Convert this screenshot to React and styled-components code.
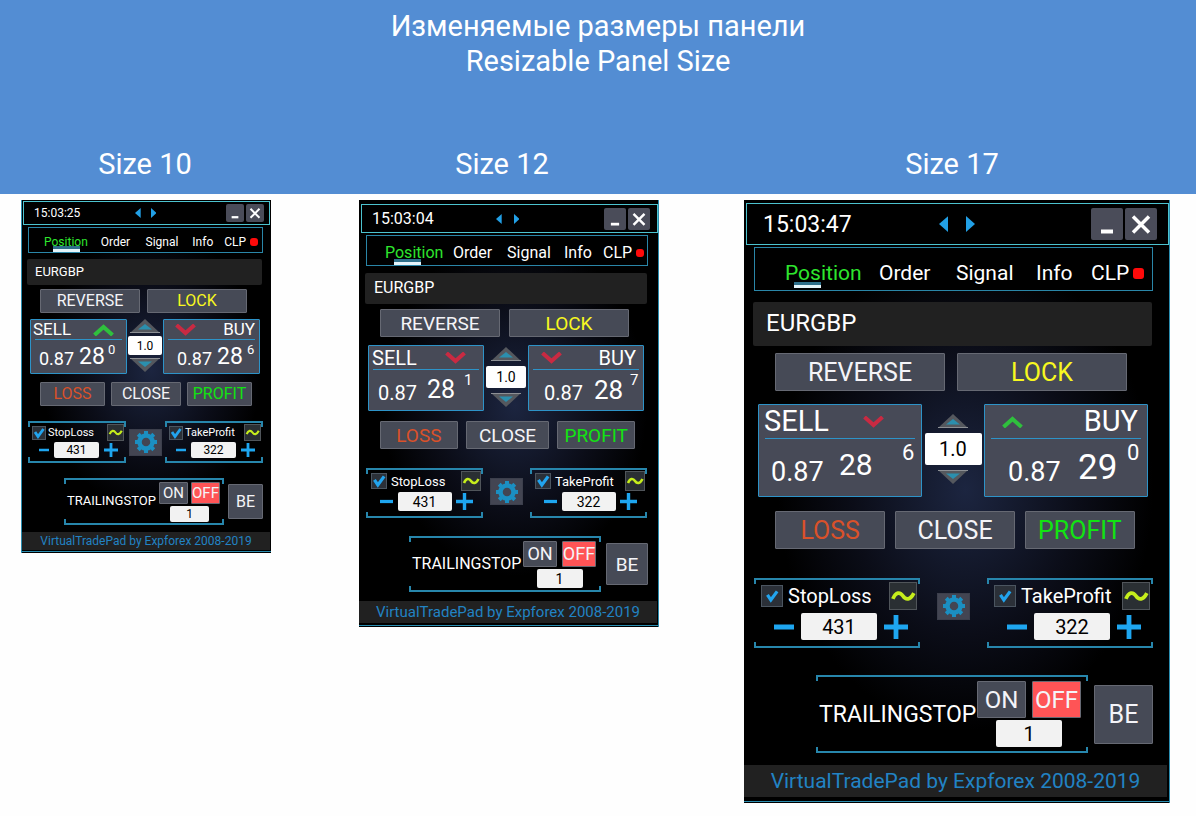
import React from "react";
import { useState } from "react";
import styled, { createGlobalStyle, css, ThemeProvider } from "styled-components";

const GlobalStyle = createGlobalStyle`
  *,
  *::before,
  *::after {
    box-sizing: border-box;
  }
  body {
    margin: 0;
    background: #fefefe;
    font-family: Roboto, "Liberation Sans", sans-serif;
  }
  button,
  input {
    margin: 0;
    padding: 0;
    border: none;
    font-family: inherit;
  }
  button {
    cursor: pointer;
  }
`;

// rows: [space above, height, left margin, right margin]
const size10 = {
  name: "Size 10",
  column: 88,
  edge: "left",
  rows: {
    title: [1, 24, 2, 1],
    tabs: [2, 26, 7, 8],
    symbol: [6, 26, 6, 9],
    hedge: [4, 24, 19, 24],
    quotes: [6, 55, 9, 11],
    exits: [8, 24, 19, 19],
    stops: [15, 42, 7, 8],
    trailing: [15, 47, 43, 8],
    footer: [7, 18, 1, 1],
  },
  bottom: 3,
  text: 12,
  timeText: 12,
  symbolText: 13,
  buttonText: 16,
  stopText: 11,
  fieldText: 12,
  trailingText: 13,
  footerText: 12,
  time: { pad: 11, width: 101, arrow: 10, arrowGap: 10, button: 18, end: 5 },
  tabColumns: "57fr 45fr 47fr 32fr 38fr",
  tabPad: 15,
  tabDrop: 3,
  underline: 0,
  dot: 8,
  symbolPad: 8,
  hedgeGap: 7,
  exitColumns: "65fr 70fr 65fr",
  exitGap: 6,
  quote: {
    head: 20,
    headText: 17,
    line: 4,
    price: 18,
    tick: 13,
    sell: { columns: "40px 29px auto", pad: 8, big: 23, lift: 0, chevron: 12, text: 2 },
    buy: { columns: "40px 30px auto", pad: 13, big: 23, lift: 0, chevron: 11, text: 4 },
    drop: 5,
  },
  lot: { column: 36, width: 34, height: 19, gap: 3, lift: 2 },
  stop: { check: 14, mark: 14, wave: 17, pad: 4, end: 2, top: 3, gap: 2, between: 1, inner: 11, outer: 8, icon: 14, field: 45, height: 16 },
  gear: { column: 39, lift: 0 },
  trail: { box: "160fr", be: "35fr", gap: 4, toggle: 29, toggleHeight: 22, toggleGap: 3, field: 39, height: 16, end: 4, top: 4, beHeight: 35 },
};

const size12 = {
  name: "Size 12",
  column: 85,
  edge: "right",
  rows: {
    title: [4, 29, 2, 1],
    tabs: [2, 31, 7, 11],
    symbol: [7, 31, 6, 12],
    hedge: [5, 28, 21, 30],
    quotes: [8, 66, 9, 15],
    exits: [10, 28, 21, 24],
    stops: [19, 50, 7, 12],
    trailing: [18, 56, 50, 11],
    footer: [9, 22, 0, 2],
  },
  bottom: 4,
  text: 16,
  timeText: 16,
  symbolText: 16,
  buttonText: 19,
  stopText: 13,
  fieldText: 14,
  trailingText: 16,
  footerText: 15,
  time: { pad: 11, width: 124, arrow: 10, arrowGap: 12, button: 22, end: 7 },
  tabColumns: "68fr 54fr 57fr 39fr 44fr",
  tabPad: 18,
  tabDrop: 4,
  underline: 0,
  dot: 8,
  symbolPad: 9,
  hedgeGap: 9,
  exitColumns: "78fr 84fr 78fr",
  exitGap: 8,
  quote: {
    head: 24,
    headText: 20,
    line: 4,
    price: 20,
    tick: 15,
    sell: { columns: "49px 37px auto", pad: 9, big: 25, lift: 1, chevron: 17, text: 3 },
    buy: { columns: "50px 36px auto", pad: 15, big: 26, lift: 0, chevron: 12, text: 7 },
    drop: 7,
  },
  lot: { column: 44, width: 40, height: 22, gap: 5, lift: 2 },
  stop: { check: 16, mark: 16, wave: 20, pad: 5, end: 2, top: 3, gap: 4, between: 1, inner: 14, outer: 10, icon: 17, field: 54, height: 19 },
  gear: { column: 47, lift: 3 },
  trail: { box: "192fr", be: "42fr", gap: 5, toggle: 34, toggleHeight: 26, toggleGap: 5, field: 46, height: 19, end: 5, top: 5, beHeight: 42 },
};

const size17 = {
  name: "Size 17",
  column: 0,
  edge: "right",
  rows: {
    title: [3, 42, 2, 1],
    tabs: [2, 44, 10, 17],
    symbol: [11, 44, 9, 18],
    hedge: [7, 38, 31, 43],
    quotes: [13, 93, 14, 22],
    exits: [14, 38, 31, 35],
    stops: [29, 70, 10, 17],
    trailing: [27, 78, 72, 17],
    footer: [12, 32, 0, 3],
  },
  bottom: 6,
  text: 21,
  timeText: 23,
  symbolText: 24,
  buttonText: 25,
  stopText: 20,
  fieldText: 20,
  trailingText: 23,
  footerText: 21,
  time: { pad: 17, width: 176, arrow: 16, arrowGap: 18, button: 32, end: 11 },
  tabColumns: "94fr 77fr 80fr 55fr 61fr",
  tabPad: 30,
  tabDrop: 8,
  underline: 2,
  dot: 11,
  symbolPad: 13,
  hedgeGap: 12,
  exitColumns: "110fr 119fr 110fr",
  exitGap: 10,
  quote: {
    head: 34,
    headText: 29,
    line: 6,
    price: 27,
    tick: 22,
    sell: { columns: "68px 63px auto", pad: 12, big: 30, lift: 6, chevron: 37, text: 5 },
    buy: { columns: "70px 49px auto", pad: 23, big: 35, lift: 1, chevron: 17, text: 9 },
    drop: 10,
  },
  lot: { column: 62, width: 57, height: 32, gap: 5, lift: 4 },
  stop: { check: 22, mark: 16, wave: 28, pad: 7, end: 3, top: 4, gap: 5, between: 3, inner: 20, outer: 12, icon: 24, field: 76, height: 27 },
  gear: { column: 67, lift: 14 },
  trail: { box: "272fr", be: "59fr", gap: 6, toggle: 49, toggleHeight: 37, toggleGap: 6, field: 66, height: 27, end: 7, top: 6, beHeight: 59 },
};

const row = (name) => css`
  height: ${({ theme }) => theme.rows[name][1]}px;
  margin: ${({ theme }) => {
    const [top, , left, right] = theme.rows[name];
    return `${top}px ${right}px 0 ${left}px`;
  }};
`;

const Header = styled.header`
  height: 194px;
  padding-top: 9px;
  display: flex;
  flex-direction: column;
  justify-content: space-between;
  background: #538dd3;
  color: white;
`;
const Heading = styled.h1`
  margin: 0;
  font-size: 29px;
  line-height: 35px;
  font-weight: 400;
  text-align: center;
`;
const SizeNames = styled.div`
  display: grid;
  grid-template-columns: 290fr 424fr 476fr;
  padding: 0 6px 12px 0;
`;
const SizeName = styled.h2`
  margin: 0;
  font-size: 29px;
  line-height: 36px;
  font-weight: 400;
  text-align: center;
`;
const Panels = styled.main`
  display: grid;
  grid-template-columns: 338fr 385fr 426fr;
  align-items: start;
  padding: 6px 26px 12px 21px;
`;
const Panel = styled.section`
  display: flow-root;
  margin-right: ${({ theme }) => theme.column}px;
  padding-bottom: ${({ theme }) => theme.bottom}px;
  color: white;
  background: linear-gradient(#2a8db0, #2a8db0) 0 calc(100% - 1px) / 100% 1px
      no-repeat,
    linear-gradient(#2a8db0, #2a8db0) ${({ theme }) => theme.edge} 0 / 1px 100%
      no-repeat,
    radial-gradient(ellipse 44% 40% at 52% 48%, #1c2540, #0b0d18 60%, #000);
`;
const TitleBar = styled.div`
  ${row("title")}
  display: flex;
  align-items: center;
  padding: 0 ${({ theme }) => theme.time.end}px 0
    ${({ theme }) => theme.time.pad - 1}px;
  border: 1px solid #4cc3cf;
  background: black;
`;
const Time = styled.time`
  flex: 0 0 ${({ theme }) => theme.time.width}px;
  font-size: ${({ theme }) => theme.timeText}px;
`;
const Arrows = styled.div`
  display: flex;
  gap: ${({ theme }) => theme.time.arrowGap}px;
  flex: 1;
`;
const ArrowButton = styled.button`
  display: flex;
  background: none;
  svg {
    height: ${({ theme }) => theme.time.arrow}px;
  }
`;
const WindowButton = styled.button`
  width: ${({ theme }) => theme.time.button}px;
  height: ${({ theme }) => theme.time.button}px;
  margin-left: 2px;
  border-radius: 2px;
  background: #4a4c59;
  svg {
    display: block;
    width: 100%;
  }
`;
const Tabs = styled.nav`
  ${row("tabs")}
  display: grid;
  grid-template-columns: ${({ theme }) => theme.tabColumns};
  padding-left: ${({ theme }) => theme.tabPad}px;
  border: 1px solid #2a86a8;
  background: black;
`;
const Tab = styled.button`
  position: relative;
  display: flex;
  align-items: center;
  padding-top: ${({ theme }) => theme.tabDrop}px;
  background: none;
  color: ${({ $active }) => ($active ? "#2ee62e" : "white")};
  font-size: ${({ theme }) => theme.text}px;
  white-space: nowrap;
  ${({ $active }) =>
    $active &&
    css`
      &::after {
        content: "";
        position: absolute;
        left: 9px;
        bottom: ${({ theme }) => theme.underline}px;
        width: 27px;
        height: 6px;
        border-bottom: 3px solid #e4f4fa;
        background: #2d6f8a;
        z-index: 0;
      }
    `}
`;
const TabText = styled.span`
  position: relative;
  z-index: 1;
`;
const Dot = styled.i`
  width: ${({ theme }) => theme.dot}px;
  height: ${({ theme }) => theme.dot}px;
  flex: none;
  margin-left: 4px;
  border-radius: 3px;
  background: #ff0a0a;
`;
const SymbolBox = styled.input`
  ${row("symbol")}
  display: block;
  width: calc(
    100% -
      ${({ theme }) => theme.rows.symbol[2] + theme.rows.symbol[3]}px
  );
  padding: 0 ${({ theme }) => theme.symbolPad}px 2px;
  border-radius: 2px;
  background: #212121;
  color: white;
  font-size: ${({ theme }) => theme.symbolText}px;
`;
const Button = styled.button`
  border: 1px solid #666973;
  border-radius: 1px;
  background: ${({ $on }) => ($on ? "#ff5456" : "#464a56")};
  color: ${({ $color }) => $color || "#f4f4f8"};
  font-size: ${({ theme }) => theme.buttonText}px;
  line-height: 1;
  white-space: nowrap;
`;
const Hedge = styled.div`
  ${row("hedge")}
  display: grid;
  grid-template-columns: 1fr 1fr;
  gap: ${({ theme }) => theme.hedgeGap}px;
`;
const Exits = styled.div`
  ${row("exits")}
  display: grid;
  grid-template-columns: ${({ theme }) => theme.exitColumns};
  gap: ${({ theme }) => theme.exitGap}px;
`;
const Quotes = styled.div`
  ${row("quotes")}
  display: grid;
  grid-template-columns: 1fr ${({ theme }) => theme.lot.column}px 1fr;
  grid-template-rows: 100%;
`;
const QuoteButton = styled.button`
  display: flex;
  flex-direction: column;
  border: 1px solid #2d93c8;
  border-radius: 1px;
  background: #474a57;
  color: white;
`;
const QuoteHead = styled.span`
  display: flex;
  flex: none;
  flex-direction: ${({ $side }) => ($side === "buy" ? "row-reverse" : "row")};
  justify-content: space-between;
  align-items: center;
  align-self: stretch;
  height: ${({ theme }) => theme.quote.head}px;
  margin: 0 ${({ theme }) => theme.quote.line}px;
  border-bottom: 1px solid #2d93c8;
  font-size: ${({ theme }) => theme.quote.headText}px;
  line-height: 1;
`;
const Side = styled.span`
  margin: 0 ${({ theme, $side }) => theme.quote[$side].text - theme.quote.line}px;
`;
const Chevron = styled.svg`
  width: 21px;
  height: 12px;
  margin: 0
    ${({ theme, $side }) => theme.quote[$side].chevron - theme.quote.line}px;
  fill: none;
  stroke: ${({ $up }) => ($up ? "#2fc03d" : "#c92a42")};
  stroke-width: 4;
`;
const Price = styled.span`
  flex: 1;
  align-self: stretch;
  display: grid;
  grid-template-columns: ${({ theme, $side }) => theme.quote[$side].columns};
  align-items: end;
  padding: 0 0 ${({ theme }) => theme.quote.drop}px
    ${({ theme, $side }) => theme.quote[$side].pad}px;
  text-align: left;
  line-height: 1;
  font-size: ${({ theme }) => theme.quote.price}px;
`;
const Big = styled.span`
  font-size: ${({ theme, $side }) => theme.quote[$side].big}px;
  padding-bottom: ${({ theme, $side }) => theme.quote[$side].lift}px;
`;
const Tick = styled.span`
  align-self: start;
  padding-top: 3px;
  font-size: ${({ theme }) => theme.quote.tick}px;
`;
const Lot = styled.div`
  display: flex;
  flex-direction: column;
  align-items: center;
  justify-content: center;
  gap: ${({ theme }) => theme.lot.gap}px;
  padding-bottom: ${({ theme }) => theme.lot.lift}px;
`;
const LotStep = styled.button`
  display: flex;
  background: none;
`;
const Field = styled.input`
  width: ${({ $width }) => $width}px;
  height: ${({ $height }) => $height}px;
  flex: none;
  border-radius: 2px;
  background: ${({ $white }) => ($white ? "white" : "#f2f2f2")};
  color: black;
  font-size: ${({ theme }) => theme.fieldText}px;
  text-align: center;
`;
const Stops = styled.div`
  ${row("stops")}
  display: grid;
  grid-template-columns: 1fr ${({ theme }) => theme.gear.column}px 1fr;
`;
const bracket = css`
  position: relative;
  &::before,
  &::after {
    content: "";
    position: absolute;
    left: 0;
    right: 0;
    height: 6px;
    border: solid #2786ac;
    pointer-events: none;
  }
  &::before {
    top: 0;
    border-width: 2px 2px 0;
  }
  &::after {
    bottom: 0;
    border-width: 0 2px 2px;
  }
`;
const StopBox = styled.div`
  ${bracket}
  padding-top: ${({ theme }) => theme.stop.top}px;
`;
const StopTop = styled.div`
  display: flex;
  align-items: center;
  justify-content: space-between;
  height: ${({ theme }) => theme.stop.wave}px;
  padding: 0 ${({ theme }) => theme.stop.end}px 0
    ${({ theme }) => theme.stop.pad}px;
`;
const CheckLabel = styled.label`
  position: relative;
  display: flex;
  align-items: center;
  gap: ${({ theme }) => theme.stop.gap}px;
  font-size: ${({ theme }) => theme.stopText}px;
  white-space: nowrap;
  svg {
    position: absolute;
    left: ${({ theme }) => (theme.stop.check - theme.stop.mark) / 2}px;
    width: ${({ theme }) => theme.stop.mark}px;
    pointer-events: none;
    visibility: hidden;
  }
  input:checked + svg {
    visibility: visible;
  }
`;
const Check = styled.input`
  appearance: none;
  width: ${({ theme }) => theme.stop.check}px;
  height: ${({ theme }) => theme.stop.check}px;
  border: 1px solid #4b5560;
  background: #2b3038;
`;
const WaveButton = styled.button`
  z-index: 1;
  width: ${({ theme }) => theme.stop.wave}px;
  height: ${({ theme }) => theme.stop.wave}px;
  border: 1px solid #50555a;
  background: #2a2f33;
  svg {
    display: block;
    width: 100%;
  }
`;
const Stepper = styled.div`
  display: flex;
  align-items: center;
  justify-content: space-between;
  height: ${({ theme }) => theme.stop.height}px;
  margin-top: ${({ theme }) => theme.stop.between}px;
  margin-left: ${({ theme }) => theme.stop.inner}px;
  margin-right: ${({ theme }) => theme.stop.outer}px;
`;
const StepButton = styled.button`
  width: ${({ theme, $minus }) =>
    $minus ? theme.stop.icon - 4 : theme.stop.icon}px;
  background: none;
  svg {
    display: block;
    width: 100%;
  }
`;
const GearCell = styled.div`
  display: flex;
  align-items: center;
  justify-content: center;
  padding-bottom: ${({ theme }) => theme.gear.lift}px;
`;
const GearButton = styled.button`
  display: flex;
  align-items: center;
  justify-content: center;
  width: 33px;
  height: 27px;
  border: 1px solid #3c3f4c;
  background: #434552;
`;
const Trailing = styled.div`
  ${row("trailing")}
  display: grid;
  grid-template-columns: ${({ theme }) => `${theme.trail.box} ${theme.trail.be}`};
  gap: ${({ theme }) => theme.trail.gap}px;
  align-items: center;
`;
const TrailBox = styled.div`
  ${bracket}
  align-self: stretch;
  display: flex;
  padding-top: ${({ theme }) => theme.trail.top}px;
  padding-right: ${({ theme }) => theme.trail.end}px;
  padding-left: 3px;
`;
const TrailLabel = styled.label`
  flex: 1;
  min-width: 0;
  align-self: center;
  padding-bottom: 6px;
  font-size: ${({ theme }) => theme.trailingText}px;
  white-space: nowrap;
`;
const TrailControls = styled.div`
  display: flex;
  flex-direction: column;
  align-items: center;
  gap: 2px;
  z-index: 1;
`;
const Toggles = styled.div`
  display: flex;
  gap: ${({ theme }) => theme.trail.toggleGap}px;
`;
const Toggle = styled(Button)`
  width: ${({ theme }) => theme.trail.toggle}px;
  height: ${({ theme }) => theme.trail.toggleHeight}px;
  display: flex;
  align-items: center;
  justify-content: center;
  font-size: ${({ theme }) => theme.buttonText - 1}px;
`;
const BreakEven = styled(Button)`
  height: ${({ theme }) => theme.trail.beHeight}px;
`;
const Footer = styled.footer`
  ${row("footer")}
  display: flex;
  align-items: center;
  justify-content: center;
  background: #212121;
  font-size: ${({ theme }) => theme.footerText}px;
`;
const FooterLink = styled.a`
  color: #2283c4;
  text-decoration: none;
  white-space: nowrap;
`;

const GearIcon = () => (
  <svg width="24" height="24" viewBox="0 0 24 24" stroke="#1b8fc2" fill="none">
    <circle cx="12" cy="12" r="6.500" strokeWidth="4.500" />
    {[0, 45, 90, 135, 180, 225, 270, 315].map((angle) => (
      <path
        key={angle}
        d="M12 1v4"
        strokeWidth="4"
        transform={`rotate(${angle} 12 12)`}
      />
    ))}
  </svg>
);

const LotArrow = ({ down }) => (
  <svg width="30" height="14" viewBox="0 0 30 14">
    <g transform={down ? "matrix(1 0 0 -1 0 14)" : undefined}>
      <path d="M15 0L30 14H0z" fill="#55585e" />
      <path d="M0 13.500H30" stroke="#8d9095" />
      <path d="M15 5L22 10.500H8z" fill="#2b8fae" />
    </g>
  </svg>
);

const Quote = ({ side, up, price, big, tick }) => (
  <QuoteButton>
    <QuoteHead $side={side}>
      <Side $side={side}>{side.toUpperCase()}</Side>
      <Chevron $side={side} $up={up} viewBox="0 0 21 12">
        <path d={up ? "M1.500 11L10.500 3L19.500 11" : "M1.500 1L10.500 9L19.500 1"} />
      </Chevron>
    </QuoteHead>
    <Price $side={side}>
      <span>{price}</span>
      <Big $side={side}>{big}</Big>
      <Tick>{tick}</Tick>
    </Price>
  </QuoteButton>
);

const Stop = ({ label, theme, value }) => {
  const [points, setPoints] = useState(value);
  return (
    <StopBox>
      <StopTop>
        <CheckLabel>
          <Check type="checkbox" defaultChecked />
          <svg viewBox="0 0 14 14">
            <path d="M3 6l3 4.500L11.500 3" fill="none" stroke="#22a4ee" strokeWidth="2.800" />
          </svg>
          {label}
        </CheckLabel>
        <WaveButton aria-label={`${label} virtual`}>
          <svg viewBox="0 0 18 18">
            <path
              d="M2 11C4 6 7 6 9 9S14 12 16.500 7"
              fill="none"
              stroke="#c6ee1c"
              strokeWidth="2.600"
            />
          </svg>
        </WaveButton>
      </StopTop>
      <Stepper>
        <StepButton $minus aria-label="Less" onClick={() => setPoints(points - 1)}>
          <svg viewBox="0 0 12 12">
            <path d="M0 6H12" stroke="#1ea6f0" strokeWidth="3" />
          </svg>
        </StepButton>
        <Field
          $width={theme.stop.field}
          $height={theme.stop.height}
          aria-label={label}
          value={points}
          onChange={(e) => setPoints(Number(e.target.value) || 0)}
        />
        <StepButton aria-label="More" onClick={() => setPoints(points + 1)}>
          <svg viewBox="0 0 14 14">
            <path d="M0 7H14M7 0V14" stroke="#1ea6f0" strokeWidth="2.800" />
          </svg>
        </StepButton>
      </Stepper>
    </StopBox>
  );
};

const TABS = ["Position", "Order", "Signal", "Info", "CLP"];

const TradePad = ({ theme, time, sell, buy }) => {
  const [tab, setTab] = useState("Position");
  const [trailing, setTrailing] = useState(false);
  const trailId = `trailing-${theme.footerText}`;
  return (
    <ThemeProvider theme={theme}>
      <Panel aria-label={theme.name}>
        <TitleBar>
          <Time>{time}</Time>
          <Arrows>
            <ArrowButton aria-label="Previous">
              <svg viewBox="0 0 8 14">
                <path d="M8 0v14L0 7z" fill="#22a0e6" />
              </svg>
            </ArrowButton>
            <ArrowButton aria-label="Next">
              <svg viewBox="0 0 8 14">
                <path d="M0 0v14L8 7z" fill="#22a0e6" />
              </svg>
            </ArrowButton>
          </Arrows>
          <WindowButton aria-label="Minimize">
            <svg viewBox="0 0 32 32">
              <path d="M10 23.500H22" stroke="white" strokeWidth="4" />
            </svg>
          </WindowButton>
          <WindowButton aria-label="Close">
            <svg viewBox="0 0 32 32">
              <path d="M8 8.500L24 24.500M24 8.500L8 24.500" stroke="white" strokeWidth="3.500" />
            </svg>
          </WindowButton>
        </TitleBar>
        <Tabs>
          {TABS.map((name) => (
            <Tab key={name} $active={tab === name} onClick={() => setTab(name)}>
              <TabText>{name}</TabText>
              {name === "CLP" && <Dot />}
            </Tab>
          ))}
        </Tabs>
        <SymbolBox aria-label="Symbol" defaultValue="EURGBP" />
        <Hedge>
          <Button>REVERSE</Button>
          <Button $color="#f8f820">LOCK</Button>
        </Hedge>
        <Quotes>
          <Quote side="sell" {...sell} />
          <Lot>
            <LotStep aria-label="Increase lot">
              <LotArrow />
            </LotStep>
            <Field
              $white
              $width={theme.lot.width}
              $height={theme.lot.height}
              aria-label="Lot"
              defaultValue="1.0"
            />
            <LotStep aria-label="Decrease lot">
              <LotArrow down />
            </LotStep>
          </Lot>
          <Quote side="buy" {...buy} />
        </Quotes>
        <Exits>
          <Button $color="#d9512a">LOSS</Button>
          <Button>CLOSE</Button>
          <Button $color="#12e312">PROFIT</Button>
        </Exits>
        <Stops>
          <Stop label="StopLoss" value={431} theme={theme} />
          <GearCell>
            <GearButton aria-label="Settings">
              <GearIcon />
            </GearButton>
          </GearCell>
          <Stop label="TakeProfit" value={322} theme={theme} />
        </Stops>
        <Trailing>
          <TrailBox>
            <TrailLabel htmlFor={trailId}>TRAILINGSTOP</TrailLabel>
            <TrailControls>
              <Toggles>
                <Toggle onClick={() => setTrailing(true)}>ON</Toggle>
                <Toggle $on={!trailing} onClick={() => setTrailing(false)}>
                  OFF
                </Toggle>
              </Toggles>
              <Field
                id={trailId}
                $width={theme.trail.field}
                $height={theme.trail.height}
                defaultValue="1"
              />
            </TrailControls>
          </TrailBox>
          <BreakEven>BE</BreakEven>
        </Trailing>
        <Footer>
          <FooterLink href="#">VirtualTradePad by Expforex 2008-2019</FooterLink>
        </Footer>
      </Panel>
    </ThemeProvider>
  );
};

const PANELS = [
  {
    theme: size10,
    time: "15:03:25",
    sell: { up: true, price: "0.87", big: "28", tick: "0" },
    buy: { up: false, price: "0.87", big: "28", tick: "6" },
  },
  {
    theme: size12,
    time: "15:03:04",
    sell: { up: false, price: "0.87", big: "28", tick: "1" },
    buy: { up: false, price: "0.87", big: "28", tick: "7" },
  },
  {
    theme: size17,
    time: "15:03:47",
    sell: { up: false, price: "0.87", big: "28", tick: "6" },
    buy: { up: true, price: "0.87", big: "29", tick: "0" },
  },
];

function App() {
  return (
    <>
      <GlobalStyle />
      <Header>
        <Heading>
          Изменяемые размеры панели
          <br />
          Resizable Panel Size
        </Heading>
        <SizeNames>
          {PANELS.map(({ theme }) => (
            <SizeName key={theme.name}>{theme.name}</SizeName>
          ))}
        </SizeNames>
      </Header>
      <Panels>
        {PANELS.map((panel) => (
          <TradePad key={panel.theme.name} {...panel} />
        ))}
      </Panels>
    </>
  );
}

export default App;
